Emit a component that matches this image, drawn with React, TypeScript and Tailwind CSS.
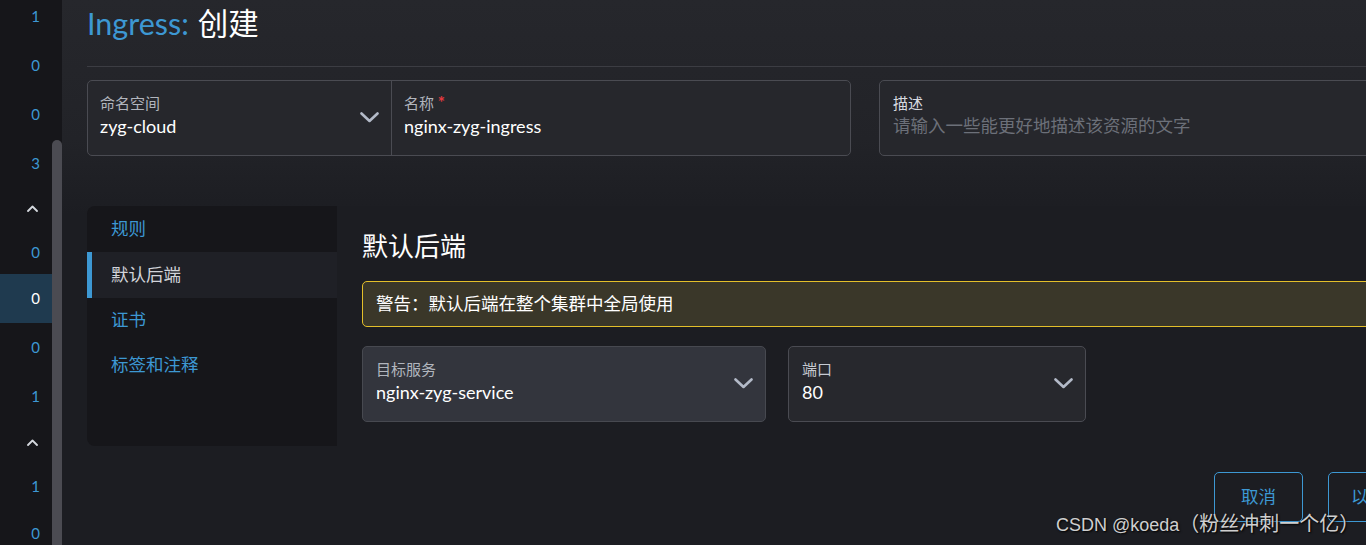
import React from "react";

const FONT = "Lato, 'Noto Sans', 'Noto Sans CJK SC', sans-serif";

function Chevron({ className = "" }: { className?: string }) {
  return (
    <svg width="19" height="11" viewBox="0 0 19 11" className={className} fill="none">
      <polyline points="1.5,1.5 9.5,9 17.5,1.5" stroke="#b3bac8" strokeWidth="2.6" strokeLinecap="round" strokeLinejoin="round" />
    </svg>
  );
}

function Caret() {
  return (
    <svg width="11" height="7" viewBox="0 0 11 7" fill="none">
      <polyline points="1,6 5.5,1.5 10,6" stroke="#d4d8de" strokeWidth="1.8" strokeLinecap="round" strokeLinejoin="round" />
    </svg>
  );
}

type Row = { h: string; v?: string; caret?: boolean; sel?: boolean };

const rows: Row[] = [
  { h: "h-[49px]", v: "1" },
  { h: "h-[49px]", v: "0" },
  { h: "h-[49px]", v: "0" },
  { h: "h-[48px]", v: "3" },
  { h: "h-[43px]", caret: true },
  { h: "h-[44px]", v: "0" },
  { h: "h-[49px]", v: "0", sel: true },
  { h: "h-[49px]", v: "0" },
  { h: "h-[48px]", v: "1" },
  { h: "h-[44px]", caret: true },
  { h: "h-[45px]", v: "1" },
  { h: "h-[49px]", v: "0" },
];

export default function App() {
  return (
    <div
      className="relative flex h-[545px] w-[1366px] overflow-hidden bg-[#1c1d22]"
      style={{ fontFamily: FONT }}
    >
      {/* Left sidebar */}
      <div className="flex h-full shrink-0 bg-[#16161a]">
        <div className="flex w-[52px] flex-col mt-[-8px]">
          {rows.map((r, i) => (
            <div
              key={i}
              className={`${r.h} flex shrink-0 items-center justify-end pr-[12px] ${
                r.sel ? "bg-[#1f3a4f] text-white" : "text-[#3d98d3]"
              } text-[15px]`}
            >
              {r.caret ? (
                <span className="pr-[2px]">
                  <Caret />
                </span>
              ) : (
                r.v
              )}
            </div>
          ))}
        </div>
        <div className="flex w-[10px] flex-col">
          <div className="h-[140px]" />
          <div className="flex-1 rounded-t-[5px] bg-[#4b4b52]" />
        </div>
      </div>

      {/* Main */}
      <div className="relative flex-1 bg-[linear-gradient(to_bottom,#26272c_0px,#222328_140px,#1c1d22_215px)]">
        <div className="w-[1580px] pl-[25px]">
          {/* Title */}
          <div className="flex h-[46px] items-center text-[30.5px] leading-none">
            <span className="text-[#3d98d3]">Ingress:</span>
            <span className="ml-[9px] text-white">创建</span>
          </div>
          <div className="mt-[20px] border-t border-[#3c3d43]" />

          {/* Inputs row */}
          <div className="mt-[13px] flex gap-[28px]">
            <div className="flex h-[76px] w-[764px] rounded-[5px] border border-[#4a4b52] bg-[#26272c]">
              <div className="relative flex w-[304px] flex-col border-r border-[#4a4b52] pl-[12px] pt-[12px]">
                <span className="text-[15px] leading-[20px] text-[#b1b5bd]">命名空间</span>
                <span className="mt-[1px] text-[18px] leading-[24px] text-white">zyg-cloud</span>
                <Chevron className="absolute right-[12px] top-[31px]" />
              </div>
              <div className="flex flex-1 flex-col pl-[12px] pt-[12px]">
                <span className="text-[15px] leading-[20px] text-[#b1b5bd]">
                  名称 <span className="text-[17px] font-bold text-[#e5393f]">*</span>
                </span>
                <span className="mt-[1px] text-[18px] leading-[24px] text-white">nginx-zyg-ingress</span>
              </div>
            </div>
            <div className="flex h-[76px] flex-1 flex-col rounded-[5px] border border-[#4a4b52] bg-[#26272c] pl-[13px] pt-[12px]">
              <span className="text-[15px] leading-[20px] text-[#d8dbe0]">描述</span>
              <span className="mt-[1px] text-[17.5px] leading-[24px] text-[#6c7079]">
                请输入一些能更好地描述该资源的文字
              </span>
            </div>
          </div>

          {/* Tabbed panel */}
          <div className="mt-[50px] flex h-[240px]">
            <div className="w-[250px] shrink-0 overflow-hidden rounded-l-[8px] bg-[#16161a]">
              <div className="flex h-[46px] items-center pl-[24px] text-[17.5px] text-[#3d98d3]">规则</div>
              <div className="flex h-[46px] items-center border-l-[5px] border-[#3d98d3] bg-[#1f2026] pl-[19px] text-[17.5px] text-[#d2d4da]">
                默认后端
              </div>
              <div className="flex h-[45px] items-center pl-[24px] text-[17.5px] text-[#3d98d3]">证书</div>
              <div className="flex h-[45px] items-center pl-[24px] text-[17.5px] text-[#3d98d3]">标签和注释</div>
            </div>
            <div className="flex-1 bg-[#1c1d22] pl-[25px] pt-[24px]">
              <div className="text-[26px] leading-[32px] text-white">默认后端</div>
              <div className="mt-[19px] flex h-[46px] items-center rounded-l-[5px] border border-[#e3bf2a] bg-[#3a3729] pl-[13px] text-[17.5px] text-white">
                警告：默认后端在整个集群中全局使用
              </div>
              <div className="mt-[19px] flex gap-[22px]">
                <div className="relative flex h-[76px] w-[404px] flex-col rounded-[5px] border border-[#474950] bg-[#33353d] pl-[13px] pt-[12px]">
                  <span className="text-[15px] leading-[20px] text-[#b1b5bd]">目标服务</span>
                  <span className="mt-[1px] text-[18px] leading-[24px] text-white">nginx-zyg-service</span>
                  <Chevron className="absolute right-[12px] top-[31px]" />
                </div>
                <div className="relative flex h-[76px] w-[298px] flex-col rounded-[5px] border border-[#4a4b52] bg-[#27282d] pl-[13px] pt-[12px]">
                  <span className="text-[15px] leading-[20px] text-[#c6cad2]">端口</span>
                  <span className="mt-[1px] text-[18px] leading-[24px] text-white">80</span>
                  <Chevron className="absolute right-[12px] top-[31px]" />
                </div>
              </div>
            </div>
          </div>

          {/* Buttons */}
          <div className="mt-[26px] flex gap-[25px] pl-[1127px]">
            <button className="flex h-[50px] w-[89px] items-center justify-center rounded-[5px] border border-[#3d98d3] text-[17.5px] text-[#3d98d3]">
              取消
            </button>
            <button className="flex h-[50px] items-center justify-center rounded-[5px] border border-[#3d98d3] px-[22px] text-[17.5px] text-[#3d98d3]">
              以 YAML 编辑
            </button>
          </div>
        </div>
      </div>

      {/* Watermark */}
      <div
        className="absolute left-[1056px] top-[511px] whitespace-nowrap text-[18px] leading-[26px] text-[#cfcfcf] [text-shadow:1px_1px_2px_#000]"
        style={{ fontFamily: "'Liberation Sans', 'Noto Sans CJK SC', sans-serif" }}
      >
        CSDN @koeda<span className="text-[20px]">（粉丝冲刺一个亿）</span>
      </div>
    </div>
  );
}
